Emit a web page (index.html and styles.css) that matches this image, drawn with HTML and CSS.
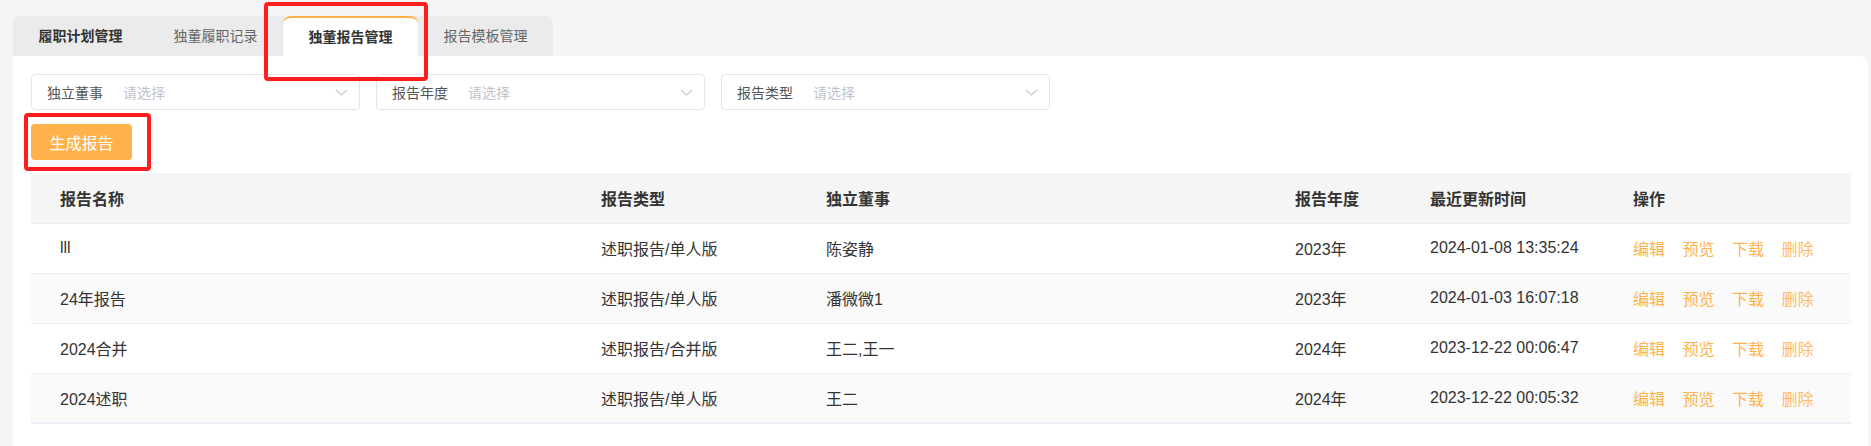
FILE: index.html
```html
<!DOCTYPE html>
<html lang="zh-CN">
<head>
    <meta charset="UTF-8">
    <meta name="viewport" content="width=device-width, initial-scale=1.0">
    <title>独董报告管理</title>
    <link rel="stylesheet" href="styles.css">
</head>
<body>
    <div class="page">
        <!-- Tabs -->
        <div class="tabs">
            <div class="tab strong">履职计划管理</div>
            <div class="tab">独董履职记录</div>
            <div class="tab active">独董报告管理</div>
            <div class="tab">报告模板管理</div>
        </div>

        <div class="panel">
            <!-- Filters -->
            <div class="filters">
                <div class="select">
                    <span class="select-label">独立董事</span>
                    <span class="select-placeholder">请选择</span>
                    <svg class="chevron" width="13" height="7" viewBox="0 0 13 7"><path d="M1 1 L6.5 6 L12 1" fill="none" stroke="#c8cad0" stroke-width="1.2"/></svg>
                </div>
                <div class="select">
                    <span class="select-label">报告年度</span>
                    <span class="select-placeholder">请选择</span>
                    <svg class="chevron" width="13" height="7" viewBox="0 0 13 7"><path d="M1 1 L6.5 6 L12 1" fill="none" stroke="#c8cad0" stroke-width="1.2"/></svg>
                </div>
                <div class="select">
                    <span class="select-label">报告类型</span>
                    <span class="select-placeholder">请选择</span>
                    <svg class="chevron" width="13" height="7" viewBox="0 0 13 7"><path d="M1 1 L6.5 6 L12 1" fill="none" stroke="#c8cad0" stroke-width="1.2"/></svg>
                </div>
            </div>

            <button class="btn-primary">生成报告</button>

            <!-- Report table -->
            <table class="report-table">
                <colgroup>
                    <col style="width: 541px">
                    <col style="width: 225px">
                    <col style="width: 469px">
                    <col style="width: 135px">
                    <col style="width: 203px">
                    <col style="width: 247px">
                </colgroup>
                <thead>
                    <tr>
                        <th>报告名称</th>
                        <th>报告类型</th>
                        <th>独立董事</th>
                        <th>报告年度</th>
                        <th>最近更新时间</th>
                        <th>操作</th>
                    </tr>
                </thead>
                <tbody>
                    <tr>
                        <td>lll</td>
                        <td>述职报告/单人版</td>
                        <td>陈姿静</td>
                        <td>2023年</td>
                        <td>2024-01-08 13:35:24</td>
                        <td class="actions"><a>编辑</a><a>预览</a><a>下载</a><a>删除</a></td>
                    </tr>
                    <tr>
                        <td>24年报告</td>
                        <td>述职报告/单人版</td>
                        <td>潘微微1</td>
                        <td>2023年</td>
                        <td>2024-01-03 16:07:18</td>
                        <td class="actions"><a>编辑</a><a>预览</a><a>下载</a><a>删除</a></td>
                    </tr>
                    <tr>
                        <td>2024合并</td>
                        <td>述职报告/合并版</td>
                        <td>王二,王一</td>
                        <td>2024年</td>
                        <td>2023-12-22 00:06:47</td>
                        <td class="actions"><a>编辑</a><a>预览</a><a>下载</a><a>删除</a></td>
                    </tr>
                    <tr>
                        <td>2024述职</td>
                        <td>述职报告/单人版</td>
                        <td>王二</td>
                        <td>2024年</td>
                        <td>2023-12-22 00:05:32</td>
                        <td class="actions"><a>编辑</a><a>预览</a><a>下载</a><a>删除</a></td>
                    </tr>
                </tbody>
            </table>
        </div>
    </div>

    <!-- Annotation boxes -->
    <div class="mark mark-tab"></div>
    <div class="mark mark-btn"></div>
</body>
</html>
```

FILE: styles.css
```css
body, html {
    margin: 0;
    height: 100%;
    background-color: #f5f5f5;
    overflow: hidden;
    position: relative;
    font-family: "Liberation Sans", "Noto Sans CJK SC", sans-serif;
    color: #333;
}

.page {
    padding: 16px 3px 0 13px;
}

/* Tabs */
.tabs {
    display: flex;
    width: 540px;
    height: 40px;
    background-color: #ebebeb;
    border-radius: 8px 8px 0 0;
}

.tab {
    width: 135px;
    height: 40px;
    line-height: 40px;
    text-align: center;
    font-size: 14px;
    color: #666;
    box-sizing: border-box;
}

.tab.strong {
    color: #333;
    font-weight: bold;
}

.tab.active {
    background-color: #fff;
    border-top: 2px solid #ffb24c;
    border-radius: 8px 8px 0 0;
    line-height: 38px;
    color: #333;
    font-weight: bold;
}

/* Panel */
.panel {
    background-color: #fff;
    border-radius: 0 8px 0 0;
    padding: 18px 17px 0 18px;
    height: 372px;
}

.filters {
    display: flex;
    gap: 16px;
}

.select {
    display: flex;
    align-items: center;
    width: 329px;
    height: 36px;
    box-sizing: border-box;
    border: 1px solid #e4e4e4;
    border-radius: 4px;
    padding: 0 11px 0 15px;
    font-size: 14px;
}

.select-label {
    width: 56px;
    margin-right: 20px;
    color: #555;
}

.select-placeholder {
    flex: 1;
    color: #c0c4cc;
}

.chevron {
    display: block;
}

.btn-primary {
    display: block;
    margin-top: 14px;
    width: 101px;
    height: 36px;
    border: none;
    border-radius: 4px;
    background-color: #ffb24c;
    color: #fff;
    font-size: 16px;
    font-family: inherit;
    padding: 0;
}

/* Table */
.report-table {
    margin-top: 13px;
    width: 100%;
    table-layout: fixed;
    border-collapse: collapse;
    font-size: 16px;
}

.report-table th,
.report-table td {
    height: 50px;
    padding: 0 0 0 29px;
    text-align: left;
    border-bottom: 1px solid #ebeef5;
    box-sizing: border-box;
    white-space: nowrap;
}

.report-table th {
    background-color: #f5f5f5;
    font-weight: bold;
    color: #333;
}

.report-table tbody tr:nth-child(even) td {
    background-color: #fafafa;
}

.report-table tbody tr:last-child td {
    border-bottom: 2px solid #ebeef5;
}

.actions a {
    color: #ffb24c;
    margin-right: 17.5px;
    cursor: pointer;
}

.actions a:last-child {
    color: #ffbb66;
}

/* Red annotation boxes */
.mark {
    position: absolute;
    border: 4px solid #ff1e1e;
    border-radius: 4px;
    box-sizing: border-box;
}

.mark-tab {
    left: 264px;
    top: 2px;
    width: 164px;
    height: 79px;
}

.mark-btn {
    left: 24px;
    top: 113px;
    width: 127px;
    height: 58px;
}
```
